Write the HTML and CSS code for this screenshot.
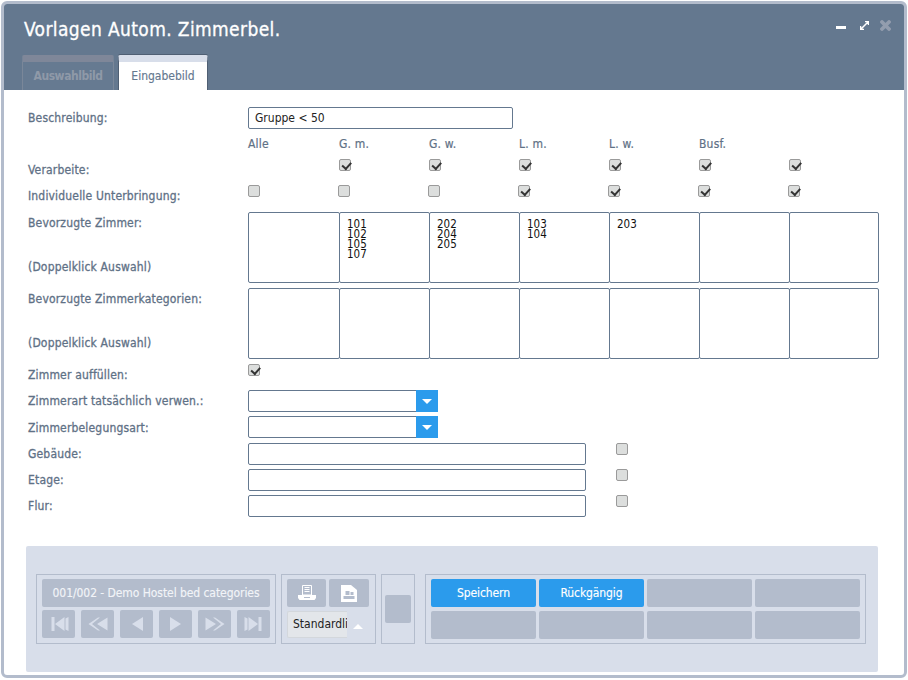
FILE: index.html
```html
<!DOCTYPE html>
<html lang="de">
<head>
<meta charset="utf-8">
<title>Vorlagen Autom. Zimmerbel.</title>
<link rel="stylesheet" href="styles.css">
</head>
<body>
<div class="window">
  <header class="head">
    <div class="title-row">
      <h1 class="title">Vorlagen Autom. Zimmerbel.</h1>
      <div class="win-icons">
        <svg class="wi wi-min" width="10" height="10" viewBox="0 0 10 10"><rect x="0" y="6" width="10" height="3" fill="#fff"/></svg>
        <svg class="wi wi-max" width="9" height="9" viewBox="0 0 9 9"><path d="M1 8L8 1M5 .5H8.500V4M.5 5V8.500H4" stroke="#fff" stroke-width="1.500" fill="none"/></svg>
        <svg class="wi" width="11" height="11" viewBox="0 0 11 11"><path d="M2 2L9 9M9 2L2 9" stroke="#939dae" stroke-width="3.800" stroke-linecap="round" fill="none"/></svg>
      </div>
    </div>
    <nav class="tabs">
      <div class="tab tab-off">Auswahlbild</div>
      <div class="tab tab-on">Eingabebild</div>
    </nav>
  </header>
  <main class="body">
    <form class="form">
      <div class="row r-desc"><label class="lbl">Beschreibung:</label><input class="field f-desc" value="Gruppe &lt; 50"></div>
      <div class="row r-cols">
        <span></span><span class="col">Alle</span><span class="col">G. m.</span><span class="col">G. w.</span><span class="col">L. m.</span><span class="col">L. w.</span><span class="col">Busf.</span><span></span>
      </div>
      <div class="row r-chk1">
        <label class="lbl">Verarbeite:</label><span></span>
        <span class="cb on"></span><span class="cb on"></span><span class="cb on"></span><span class="cb on"></span><span class="cb on"></span><span class="cb on"></span>
      </div>
      <div class="row r-chk2">
        <label class="lbl">Individuelle Unterbringung:</label>
        <span class="cb cb-first"></span><span class="cb"></span><span class="cb"></span><span class="cb on"></span><span class="cb on"></span><span class="cb on"></span><span class="cb on"></span>
      </div>
      <div class="row r-box">
        <div class="lbl-stack"><label class="lbl">Bevorzugte Zimmer:</label><label class="lbl">(Doppelklick Auswahl)</label></div>
        <div class="box"></div>
        <div class="box">101<br>102<br>105<br>107</div>
        <div class="box">202<br>204<br>205</div>
        <div class="box">103<br>104</div>
        <div class="box">203</div>
        <div class="box"></div>
        <div class="box"></div>
      </div>
      <div class="row r-box r-box2">
        <div class="lbl-stack"><label class="lbl">Bevorzugte Zimmerkategorien:</label><label class="lbl">(Doppelklick Auswahl)</label></div>
        <div class="box"></div><div class="box"></div><div class="box"></div><div class="box"></div><div class="box"></div><div class="box"></div><div class="box"></div>
      </div>
      <div class="row r-fill"><label class="lbl">Zimmer auffüllen:</label><span class="cb on"></span></div>
      <div class="row r-sel"><label class="lbl">Zimmerart tatsächlich verwen.:</label><div class="sel"><span class="sel-btn"></span></div></div>
      <div class="row r-sel r-sel2"><label class="lbl">Zimmerbelegungsart:</label><div class="sel"><span class="sel-btn"></span></div></div>
      <div class="row r-txt"><label class="lbl">Gebäude:</label><input class="field f-wide"><span class="cb"></span></div>
      <div class="row r-txt"><label class="lbl">Etage:</label><input class="field f-wide"><span class="cb"></span></div>
      <div class="row r-txt"><label class="lbl">Flur:</label><input class="field f-wide"><span class="cb"></span></div>
    </form>
    <footer class="foot">
      <section class="grp g-nav">
        <div class="btn rec">001/002 - Demo Hostel bed categories</div>
        <div class="nav-row">
          <div class="btn nb"><svg width="20" height="16" viewBox="0 0 20 16"><path d="M2.500 1h3v14h-3zM15.500 1v14L6 8zM16.500 2.500l3-1.500v14l-3-1.500z" fill="#d8deea"/></svg></div>
          <div class="btn nb"><svg width="20" height="16" viewBox="0 0 20 16"><path d="M10 1.500L.5 8l9.500 6.500h2L4 8l8-6.500zM19.500 1.500L9 8l10.500 6.500z" fill="#d8deea"/></svg></div>
          <div class="btn nb"><svg width="14" height="16" viewBox="0 0 14 16"><path d="M13 1v14L2 8z" fill="#d8deea"/></svg></div>
          <div class="btn nb"><svg width="14" height="16" viewBox="0 0 14 16"><path d="M1 1v14l11-7z" fill="#d8deea"/></svg></div>
          <div class="btn nb"><svg width="20" height="16" viewBox="0 0 20 16"><path d="M10 1.500L19.500 8 10 14.500H8L16 8 8 1.500zM.5 1.500L11 8 .5 14.500z" fill="#d8deea"/></svg></div>
          <div class="btn nb"><svg width="20" height="16" viewBox="0 0 20 16"><path d="M17.500 1h-3v14h3zM4.500 1v14L14 8zM3.500 2.500L.5 1v14l3-1.500z" fill="#d8deea"/></svg></div>
        </div>
      </section>
      <section class="grp g-print">
        <div class="print-row">
          <div class="btn pb"><svg width="20" height="16" viewBox="0 0 20 16"><path d="M5.500 .5h9v9.500h-9z" fill="none" stroke="#fff"/><path d="M7.500 2.500h5M7.500 4.500h5M7.500 6.500h5" stroke="#fff"/><path d="M1 10h18v3l-1.500 2h-15L1 13z" fill="#fff"/><path d="M7 12h6v1H7z" fill="#b3bccc"/></svg></div>
          <div class="btn pb pb2"><svg width="18" height="17" viewBox="0 0 18 17"><path d="M1 0h10l6 5v12H1z" fill="#fff"/><path d="M5.500 6h4v4h-4zM10.500 7h3v3h-3zM3.500 11h11v3h-11z" fill="#b3bccc"/></svg></div>
        </div>
        <div class="list-sel"><span class="list-val">Standardli</span><svg class="up" width="10" height="6" viewBox="0 0 10 6"><path d="M0 5L5 0l5 5z" fill="#fff"/></svg></div>
      </section>
      <section class="grp g-mini"><div class="btn mini"></div></section>
      <section class="grp g-act">
        <div class="btn act blue">Speichern</div>
        <div class="btn act blue">Rückgängig</div>
        <div class="btn act"></div>
        <div class="btn act"></div>
        <div class="btn act"></div>
        <div class="btn act"></div>
        <div class="btn act"></div>
        <div class="btn act"></div>
      </section>
    </footer>
  </main>
</div>
</body>
</html>
```
FILE: styles.css
```css
* { box-sizing: border-box; }
html, body { margin: 0; padding: 0; background: #fff; }
body { width: 908px; height: 680px; padding: 1px; font-family: "DejaVu Sans Condensed", "DejaVu Sans", sans-serif; font-size: 12px; color: #5f7186; }
.window { width: 906px; height: 677px; border: 3px solid #b3bccc; border-radius: 6px; display: flex; flex-direction: column; background: #fff; overflow: hidden; }

.head { height: 86px; background: #64788f; padding: 0 0 0 18px; flex: none; display: flex; flex-direction: column; }
.title-row { display: flex; justify-content: space-between; height: 51px; padding-top: 12px; }
.title { margin: 0 0 0 2px; font-size: 19px; font-weight: 400; line-height: 26px; color: #fff; letter-spacing: .38px; -webkit-text-stroke: .3px #fff; }
.win-icons { display: flex; gap: 11px; padding: 4px 13px 0 0; align-items: flex-start; }
.wi { display: block; }
.wi-min { margin: 0 3px 0 0; }
.wi-max { margin-top: 1px; }
.tabs { display: flex; gap: 4px; height: 35px; }
.tab { width: 90px; text-align: center; border-radius: 2px 2px 0 0; border: 1px solid #4f5f73; border-bottom: 0; line-height: 26px; }
.tab-off { width: 92px; background: #667a91; border-color: #7a8799; border-top: 7px solid #7f8799; padding-top: 1px; color: #8f99a8; font-weight: 700; letter-spacing: -.45px; }
.tab-on { background: #fff; border-top: 7px solid #d8deea; box-shadow: 0 -1px 0 #4f5f73; padding-top: 1px; color: #64788f; -webkit-text-stroke: .15px #64788f; }

.body { flex: 1; display: flex; flex-direction: column; padding: 0 0 3px 22px; min-height: 0; }
.form { flex: 1; padding-top: 17px; }
.row { display: grid; grid-template-columns: 220px 91px repeat(6, 90px); margin-left: 2px; align-items: start; }
.lbl { display: block; font-weight: 400; line-height: 16px; color: #5f7186; letter-spacing: .17px; -webkit-text-stroke: .3px #5f7186; white-space: nowrap; }
.field { display: block; height: 22px; border: 1px solid #64788f; border-radius: 2px; background: #fff; padding: 0 6px; font: inherit; color: #222; outline: 0; }
.f-desc { grid-column: 2 / span 3; width: 265px; }
.r-desc { height: 22px; margin-bottom: 7px; }
.r-desc .lbl { padding-top: 3px; }
.r-cols { height: 23px; }
.r-cols .col { line-height: 16px; letter-spacing: .2px; -webkit-text-stroke: .2px #5f7186; }
.r-chk1 { height: 26px; }
.r-chk2 { height: 27px; }
.r-chk1 .lbl { padding-top: 3px; }
.r-chk2 .lbl { padding-top: 3px; }
.r-chk2 .cb { margin-left: -1px; }
.r-chk2 .cb-first { margin-left: 0; }

.cb { display: block; width: 12px; height: 12px; border: 1px solid #9a9a9a; border-radius: 2px; background: #dcdedd; position: relative; }
.cb.on::after { content: ""; position: absolute; left: 1.5px; top: 2px; width: 7px; height: 3.5px; border-left: 2.400px solid #333; border-bottom: 2.400px solid #333; transform: rotate(-48deg); }

.r-box { height: 71px; margin-bottom: 5px; }
.box { height: 71px; width: calc(100% + 1px); border: 1px solid #64788f; border-radius: 2px; background: #fff; padding: 6px 6px 0 7px; color: #111; line-height: 10px; font-size: 11.5px; }
.box:last-child { width: 100%; }
.lbl-stack { height: 71px; display: flex; flex-direction: column; justify-content: space-between; padding: 3px 0 8px; }

.r-fill { height: 26px; }
.r-fill .lbl { padding-top: 3px; }
.sel { grid-column: 2 / span 3; width: 190px; height: 22px; border: 1px solid #64788f; border-radius: 2px; background: #fff; display: flex; justify-content: flex-end; }
.sel-btn { width: 22px; margin: -1px; background: #2b9bec; position: relative; }
.sel-btn::after { content: ""; position: absolute; left: 6px; top: 9px; border-style: solid; border-width: 5px 5px 0; border-color: #fff transparent transparent; }
.r-sel { height: 26px; }
.r-sel .lbl { padding-top: 3px; }
.r-sel2 { height: 27px; }
.r-sel2 .lbl { padding-top: 4px; }
.r-txt { height: 26px; }
.r-txt .lbl { padding-top: 3px; }
.f-wide { grid-column: 2 / span 4; width: 338px; }
.r-txt .cb { grid-column: 6; grid-row: 1; margin-left: 7px; }

.foot { height: 126px; width: 852px; flex: none; background: #d8deea; border-radius: 2px; display: flex; align-items: center; padding-left: 10px; gap: 5px; }
.grp { height: 70px; border: 1px solid #b3bccc; flex: none; }
.btn { background: #b3bccc; border-radius: 2px; color: #f2f4f8; display: flex; align-items: center; justify-content: center; height: 28px; }
.g-nav { width: 240px; padding: 4px 5px; }
.rec { width: 228px; letter-spacing: -.06px; -webkit-text-stroke: .15px #f2f4f8; }
.nav-row { display: flex; gap: 6px; margin-top: 3px; }
.nb { width: 33px; }
.g-print { width: 95px; padding: 4px 5px; }
.print-row { display: flex; gap: 3px; }
.pb { width: 39px; }
.pb2 { width: 40px; }
.list-sel { display: flex; align-items: center; margin-top: 4px; height: 27px; }
.list-val { width: 60px; height: 27px; background: #e3e6ea; border: 1px solid #d3d7dc; border-right: 0; border-radius: 2px 0 0 2px; line-height: 25px; padding-left: 5px; color: #222; overflow: hidden; white-space: nowrap; }
.up { margin: 5px 0 0 6px; }
.g-mini { width: 34px; padding-left: 3px; display: flex; align-items: center; }
.mini { width: 26px; }
.g-act { width: 441px; margin-left: 5px; padding: 4px 5px; display: grid; grid-template-columns: repeat(4, 105px); gap: 3px; }
.act { letter-spacing: -.1px; -webkit-text-stroke: .15px #fff; }
.blue { background: #2b9bec; color: #fff; }
```
